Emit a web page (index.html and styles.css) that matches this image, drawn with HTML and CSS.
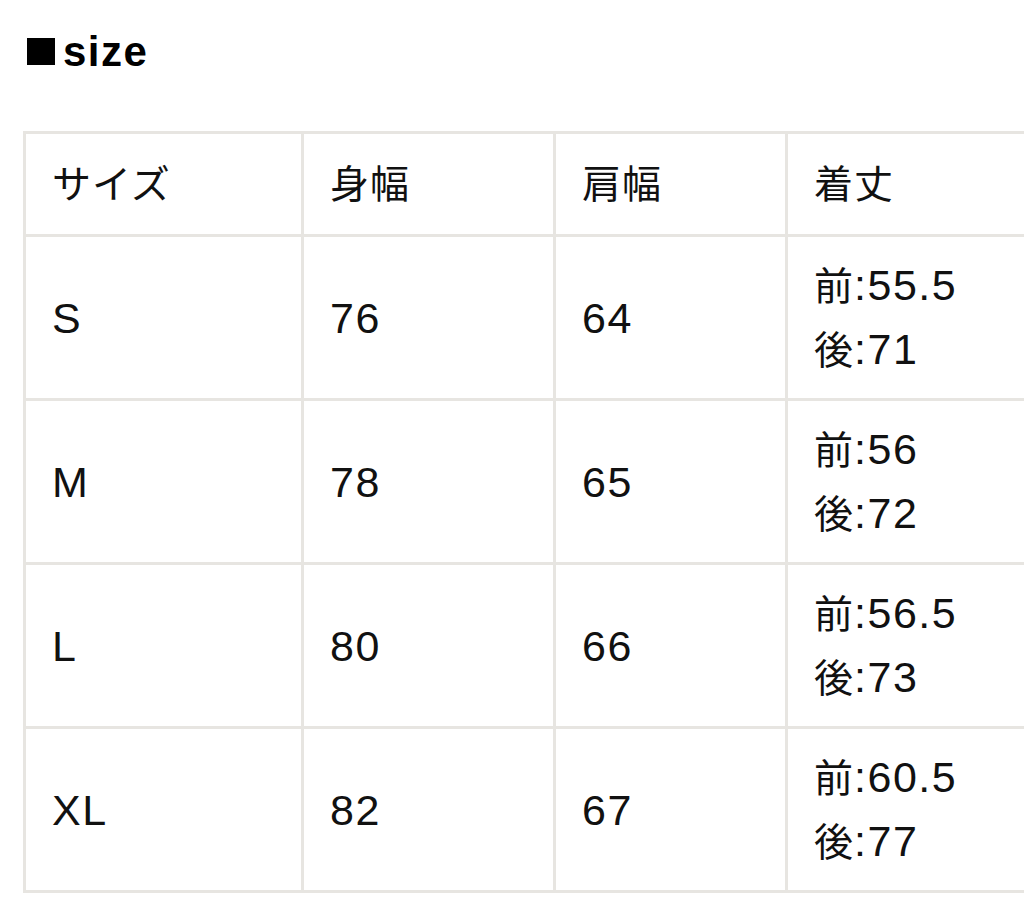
FILE: index.html
```html
<!DOCTYPE html>
<html lang="ja">
<head>
<meta charset="utf-8">
<link rel="stylesheet" href="styles.css">
</head>
<body>
<div class="page">
  <h2 class="title"><span class="sq"></span><span class="title-text">size</span></h2>
  <table class="size-table">
    <tr class="head">
      <td class="c1"><span class="jp">サイズ</span></td>
      <td class="c2"><span class="jp">身幅</span></td>
      <td class="c3"><span class="jp">肩幅</span></td>
      <td class="c4"><span class="jp">着丈</span></td>
    </tr>
    <tr>
      <td>S</td><td>76</td><td>64</td><td><span class="jp">前</span>:55.5<br><span class="jp">後</span>:71</td>
    </tr>
    <tr>
      <td>M</td><td>78</td><td>65</td><td><span class="jp">前</span>:56<br><span class="jp">後</span>:72</td>
    </tr>
    <tr>
      <td>L</td><td>80</td><td>66</td><td><span class="jp">前</span>:56.5<br><span class="jp">後</span>:73</td>
    </tr>
    <tr>
      <td>XL</td><td>82</td><td>67</td><td><span class="jp">前</span>:60.5<br><span class="jp">後</span>:77</td>
    </tr>
  </table>
</div>
</body>
</html>
```
FILE: styles.css
```css
html, body {
  margin: 0;
  padding: 0;
  background: #fff;
  overflow: hidden;
}
.page {
  padding: 0 0 0 23px;
  width: 1100px;
  font-family: "Liberation Sans", "Noto Sans CJK JP", sans-serif;
  color: #111;
}
.title {
  margin: 0;
  padding-top: 27px;
  height: 131px;
  box-sizing: border-box;
  font-size: 42px;
  font-weight: bold;
  line-height: 50px;
  display: flex;
  align-items: flex-start;
  gap: 8px;
  color: #000;
}
.title-text {
  letter-spacing: 1.5px;
}
.sq {
  display: block;
  width: 28px;
  height: 27px;
  background: #000;
  margin: 11px 0 0 4px;
}
.size-table {
  border-collapse: separate;
  border-spacing: 0;
  table-layout: fixed;
  width: 1025px;
  font-size: 43px;
  line-height: 62px;
  letter-spacing: 1.5px;
}
.size-table td {
  box-sizing: border-box;
  border-right: 3px solid #e7e5e1;
  border-bottom: 3px solid #e7e5e1;
  padding: 0 0 0 26px;
  vertical-align: middle;
  height: 164px;
  white-space: nowrap;
}
.size-table td:first-child {
  border-left: 3px solid #e7e5e1;
}
.size-table .head td {
  border-top: 3px solid #e7e5e1;
  height: 106px;
}
.jp {
  font-size: 39px;
  letter-spacing: 1px;
}
.c1 { width: 281px; }
.c2 { width: 252px; }
.c3 { width: 232px; }
.c4 { width: 260px; }
```
